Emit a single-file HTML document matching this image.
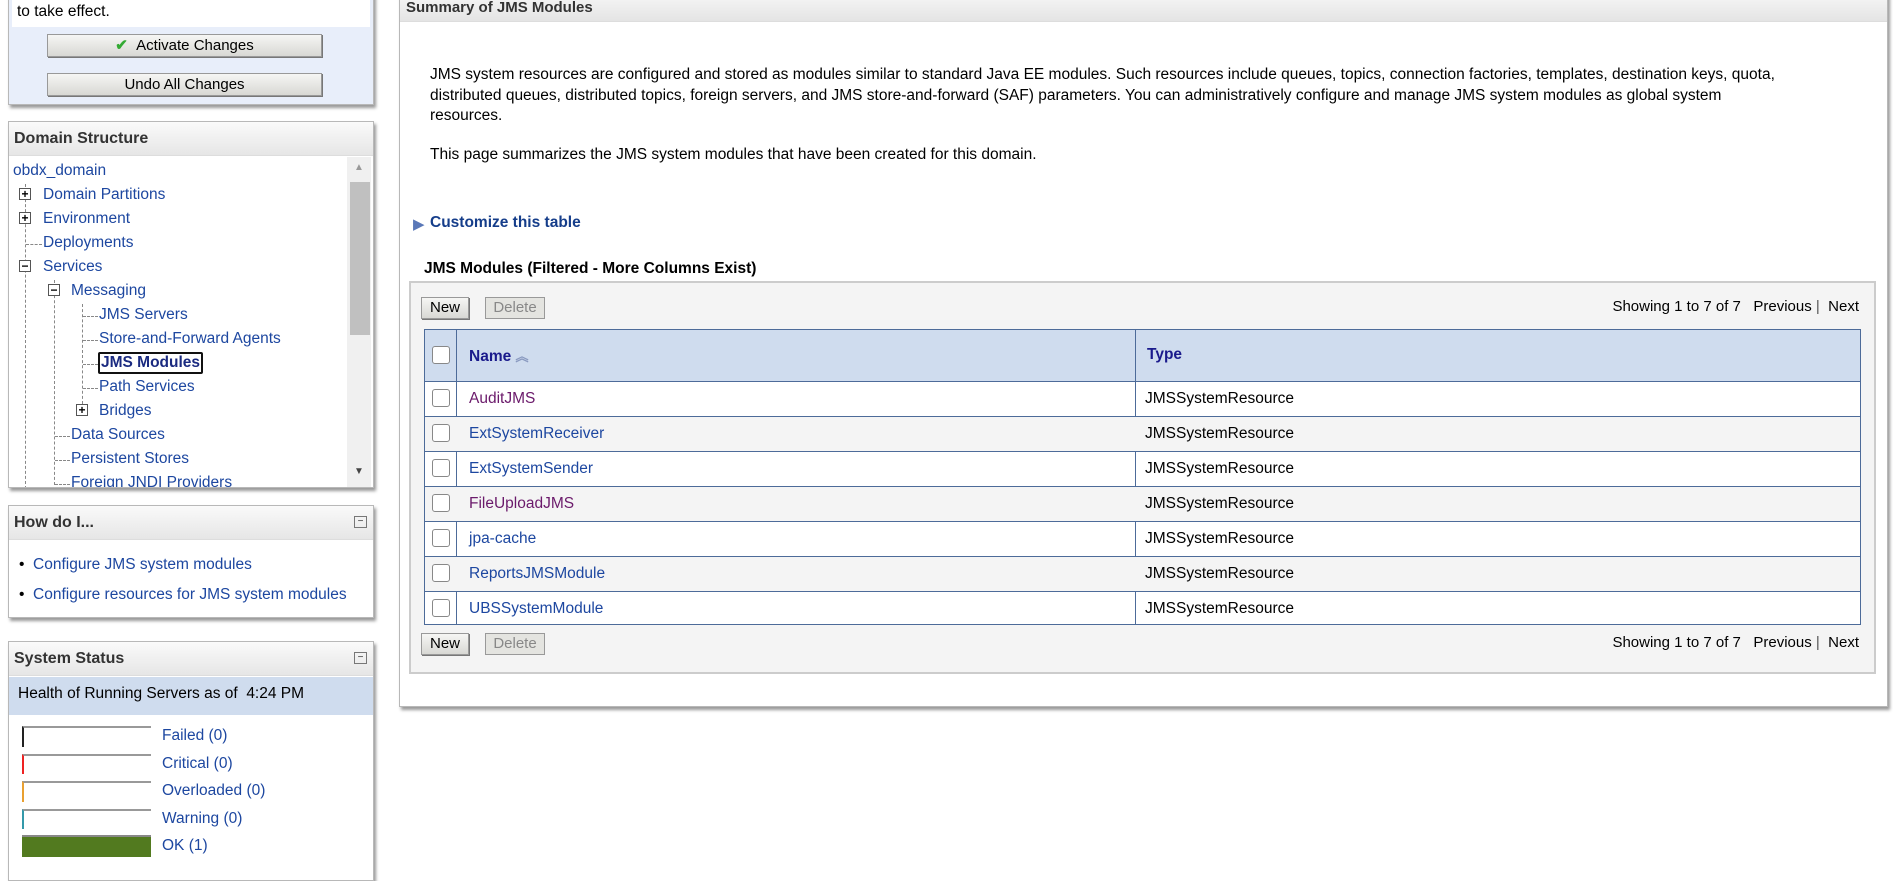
<!DOCTYPE html>
<html><head><meta charset="utf-8"><style>
*{margin:0;padding:0;box-sizing:border-box}
body{width:1893px;height:864px;overflow:hidden;background:#fff;font-family:"Liberation Sans",sans-serif;font-size:15px;color:#000;position:relative}
.a{position:absolute}
a,.l{color:#1d47a0;text-decoration:none}
.panel{position:absolute;border:1px solid #b8b8b8;box-shadow:2px 3px 3px #999;background:#fff}
.ph{height:34px;background:linear-gradient(#fafafa,#e6e6e6);font-weight:bold;font-size:16px;color:#333;padding:8px 0 0 5px;border-bottom:1px solid #ddd}
.btn{position:absolute;border:1px solid #999;background:linear-gradient(#f6f6f4,#d8d8d4);text-align:center;font-size:15px;box-shadow:1px 1px 0 #777}
.tree div{position:absolute;white-space:nowrap;font-size:15.5px;color:#1d47a0}
.box{position:absolute;width:12px;height:12px;border:1px solid #555;background:#fff;font-size:12px;line-height:10px;text-align:center;color:#000;font-weight:bold}
.cb{position:absolute;width:18px;height:18px;border:1px solid #888;border-radius:3px;background:#fff}
.row{position:absolute;left:0;width:1435px;height:35px;border-top:1px solid #4d6b99}
.row span{position:absolute;top:8px;font-size:15.5px}
</style></head><body>

<div class="panel" style="left:8px;top:-10px;width:366px;height:115px;background:#e8eefa">
 <div class="a" style="left:3px;top:0;width:358px;height:36px;background:#fff"></div>
 <div class="a" style="left:8px;top:12px;font-size:15.5px">to take effect.</div>
 <div class="btn" style="left:38px;top:43px;width:275px;height:23px;line-height:21px"><span style="color:#3a3;font-weight:bold">✔</span>&nbsp;&nbsp;Activate Changes</div>
 <div class="btn" style="left:38px;top:82px;width:275px;height:23px;line-height:21px">Undo All Changes</div>
</div>

<div class="panel" style="left:8px;top:121px;width:366px;height:367px;overflow:hidden">
 <div class="ph">Domain Structure</div>
 <div class="a" style="left:338px;top:35px;width:24px;height:331px;background:#f0f0f0"></div>
 <div class="a" style="left:341px;top:60px;width:20px;height:153px;background:#c0c0c0"></div>
 <div class="a" style="left:345px;top:40px;color:#999;font-size:10px">▲</div>
 <div class="a" style="left:345px;top:344px;color:#444;font-size:10px">▼</div>
 <div class="tree">
  <div style="left:4px;top:40px">obdx_domain</div>
  <div style="left:34px;top:64px">Domain Partitions</div>
  <div style="left:34px;top:88px">Environment</div>
  <div style="left:34px;top:112px">Deployments</div>
  <div style="left:34px;top:136px">Services</div>
  <div style="left:62px;top:160px">Messaging</div>
  <div style="left:90px;top:184px">JMS Servers</div>
  <div style="left:90px;top:208px">Store-and-Forward Agents</div>
  <div style="left:89px;top:230px;font-weight:bold;color:#1a2a80;border:2px solid #111;border-radius:2px;padding:0 1px;line-height:18px">JMS Modules</div>
  <div style="left:90px;top:256px">Path Services</div>
  <div style="left:90px;top:280px">Bridges</div>
  <div style="left:62px;top:304px">Data Sources</div>
  <div style="left:62px;top:328px">Persistent Stores</div>
  <div style="left:62px;top:352px">Foreign JNDI Providers</div>
 </div>
 <div class="a" style="left:16px;top:62px;height:305px;border-left:1px dashed #888"></div>
 <div class="a" style="left:45px;top:158px;height:210px;border-left:1px dashed #888"></div>
 <div class="a" style="left:73px;top:182px;height:100px;border-left:1px dashed #888"></div>
 <div class="a" style="left:17px;top:122px;width:16px;border-top:1px dashed #888"></div>
 <div class="a" style="left:46px;top:314px;width:15px;border-top:1px dashed #888"></div>
 <div class="a" style="left:46px;top:338px;width:15px;border-top:1px dashed #888"></div>
 <div class="a" style="left:46px;top:362px;width:15px;border-top:1px dashed #888"></div>
 <div class="a" style="left:74px;top:194px;width:15px;border-top:1px dashed #888"></div>
 <div class="a" style="left:74px;top:218px;width:15px;border-top:1px dashed #888"></div>
 <div class="a" style="left:74px;top:242px;width:15px;border-top:1px dashed #888"></div>
 <div class="a" style="left:74px;top:266px;width:15px;border-top:1px dashed #888"></div>
 <div class="box" style="left:10px;top:66px">+</div>
 <div class="box" style="left:10px;top:90px">+</div>
 <div class="box" style="left:10px;top:138px">−</div>
 <div class="box" style="left:39px;top:162px">−</div>
 <div class="box" style="left:67px;top:282px">+</div>
</div>

<div class="panel" style="left:8px;top:505px;width:366px;height:113px">
 <div class="ph">How do I...<span style="position:absolute;right:6px;top:10px;width:13px;height:12px;border:1px solid #777;font-size:10px;line-height:9px;text-align:center;font-weight:normal">−</span></div>
 <div class="a" style="left:10px;top:50px;font-size:15.5px">•&nbsp;&nbsp;<a>Configure JMS system modules</a></div>
 <div class="a" style="left:10px;top:80px;font-size:15.5px">•&nbsp;&nbsp;<a>Configure resources for JMS system modules</a></div>
</div>

<div class="panel" style="left:8px;top:641px;width:366px;height:240px">
 <div class="ph">System Status<span style="position:absolute;right:6px;top:10px;width:13px;height:12px;border:1px solid #777;font-size:10px;line-height:9px;text-align:center;font-weight:normal">−</span></div>
 <div class="a" style="left:0;top:35px;width:364px;height:38px;background:#cfdcee;padding:8px 0 0 9px;font-size:15.5px">Health of Running Servers as of &nbsp;4:24 PM</div>
 <div class="a" style="left:13px;top:84px;width:129px;height:21px;border-top:2px solid #999;border-left:2px solid #222"></div>
 <div class="a" style="left:13px;top:112px;width:129px;height:20px;border-top:2px solid #999;border-left:2px solid #e22"></div>
 <div class="a" style="left:13px;top:139px;width:129px;height:21px;border-top:2px solid #999;border-left:2px solid #e9a030"></div>
 <div class="a" style="left:13px;top:167px;width:129px;height:20px;border-top:2px solid #999;border-left:2px solid #39a"></div>
 <div class="a" style="left:13px;top:193px;width:129px;height:22px;border-top:2px solid #888;background:#527a1f"></div>
 <div class="a l" style="left:153px;top:85px;font-size:15.5px">Failed (0)</div>
 <div class="a l" style="left:153px;top:113px;font-size:15.5px">Critical (0)</div>
 <div class="a l" style="left:153px;top:140px;font-size:15.5px">Overloaded (0)</div>
 <div class="a l" style="left:153px;top:168px;font-size:15.5px">Warning (0)</div>
 <div class="a l" style="left:153px;top:195px;font-size:15.5px">OK (1)</div>
</div>

<div class="panel" style="left:399px;top:-10px;width:1489px;height:717px">
 <div class="a" style="left:0;top:0;width:1487px;height:31px;background:linear-gradient(#f8f8f8,#e4e4e4);border-bottom:1px solid #ddd"></div>
 <div class="a" style="left:6px;top:8px;font-weight:bold;font-size:15px;color:#333">Summary of JMS Modules</div>
 <div class="a" style="left:30px;top:74px;width:1460px;white-space:nowrap;font-size:15.5px;line-height:20.5px">JMS system resources are configured and stored as modules similar to standard Java EE modules. Such resources include queues, topics, connection factories, templates, destination keys, quota,<br>distributed queues, distributed topics, foreign servers, and JMS store-and-forward (SAF) parameters. You can administratively configure and manage JMS system modules as global system<br>resources.</div>
 <div class="a" style="left:30px;top:155px;font-size:15.5px">This page summarizes the JMS system modules that have been created for this domain.</div>
 <div class="a" style="left:13px;top:224px;color:#5a78b8;font-size:15px">▶</div>
 <div class="a" style="left:30px;top:223px;font-weight:bold;color:#153d8a;font-size:15.5px">Customize this table</div>
 <div class="a" style="left:24px;top:269px;font-weight:bold;font-size:15.5px">JMS Modules (Filtered - More Columns Exist)</div>
 <div class="a" style="left:9px;top:290px;width:1467px;height:393px;background:#f4f4f4;border:2px solid #ccc">
  <div class="btn" style="left:10px;top:14px;width:48px;height:22px;line-height:20px">New</div>
  <div class="btn" style="left:74px;top:14px;width:60px;height:22px;line-height:20px;color:#888;box-shadow:none;background:#e4e4e0">Delete</div>
  <div class="a" style="right:15px;top:15px;font-size:15px">Showing 1 to 7 of 7 &nbsp;&nbsp;Previous <span style="color:#555">|</span>&nbsp; Next</div>
  <div class="a" style="left:13px;top:46px;width:1437px;height:296px;border:1px solid #4d6b99;background:#fff">
   <div class="a" style="left:0;top:0;width:1435px;height:51px;background:#cfdcee"></div>
   <div class="a" style="left:31px;top:0;height:294px;border-left:1px solid #4d6b99"></div>
   <div class="a" style="left:710px;top:0;height:294px;border-left:1px solid #4d6b99"></div>
   <div class="cb" style="left:7px;top:16px"></div>
   <div class="a" style="left:44px;top:16px;font-weight:bold;color:#1a1a8c;font-size:15.5px">Name <span style="color:#8a9ac0;font-size:13px">︽</span></div>
   <div class="a" style="left:722px;top:16px;font-weight:bold;color:#1a1a8c;font-size:15.5px">Type</div>
   <div class="row" style="top:51px"><div class="cb" style="left:7px;top:7px"></div><span style="left:44px;color:#6b1a6b">AuditJMS</span><span style="left:720px">JMSSystemResource</span></div>
   <div class="row" style="top:86px;background:#f4f4f4"><div class="cb" style="left:7px;top:7px"></div><span style="left:44px" class="l">ExtSystemReceiver</span><span style="left:720px">JMSSystemResource</span></div>
   <div class="row" style="top:121px"><div class="cb" style="left:7px;top:7px"></div><span style="left:44px" class="l">ExtSystemSender</span><span style="left:720px">JMSSystemResource</span></div>
   <div class="row" style="top:156px;background:#f4f4f4"><div class="cb" style="left:7px;top:7px"></div><span style="left:44px;color:#6b1a6b">FileUploadJMS</span><span style="left:720px">JMSSystemResource</span></div>
   <div class="row" style="top:191px"><div class="cb" style="left:7px;top:7px"></div><span style="left:44px" class="l">jpa-cache</span><span style="left:720px">JMSSystemResource</span></div>
   <div class="row" style="top:226px;background:#f4f4f4"><div class="cb" style="left:7px;top:7px"></div><span style="left:44px" class="l">ReportsJMSModule</span><span style="left:720px">JMSSystemResource</span></div>
   <div class="row" style="top:261px;height:34px"><div class="cb" style="left:7px;top:7px"></div><span style="left:44px" class="l">UBSSystemModule</span><span style="left:720px">JMSSystemResource</span></div>
  </div>
  <div class="btn" style="left:10px;top:350px;width:48px;height:22px;line-height:20px">New</div>
  <div class="btn" style="left:74px;top:350px;width:60px;height:22px;line-height:20px;color:#888;box-shadow:none;background:#e4e4e0">Delete</div>
  <div class="a" style="right:15px;top:351px;font-size:15px">Showing 1 to 7 of 7 &nbsp;&nbsp;Previous <span style="color:#555">|</span>&nbsp; Next</div>
 </div>
</div>
</body></html>
